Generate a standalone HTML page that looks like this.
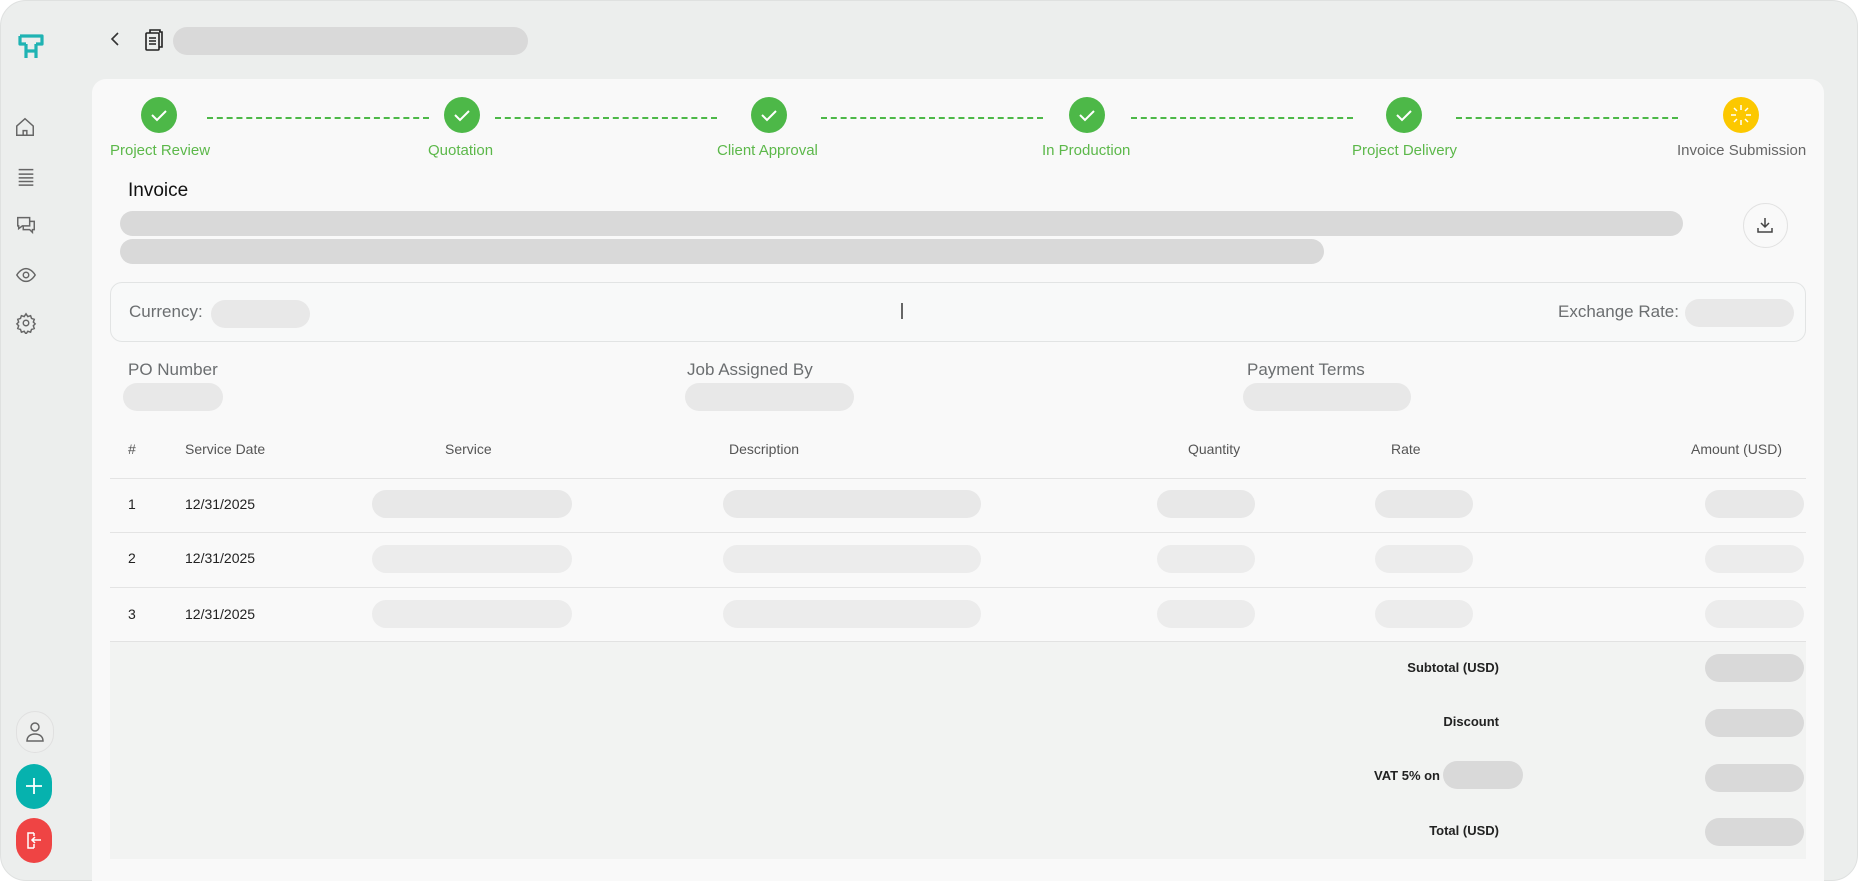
<!DOCTYPE html>
<html><head><meta charset="utf-8"><style>
*{margin:0;padding:0;box-sizing:border-box}
html,body{width:1858px;height:881px;overflow:hidden}
body{background:#fff;font-family:"Liberation Sans",sans-serif;position:relative}
.frame{position:absolute;left:0;top:0;width:1858px;height:881px;background:#eceeed;border-radius:26px;border:1px solid #dfe1e0;overflow:hidden}
.a{position:absolute}
.card{left:92px;top:79px;width:1732px;height:802px;background:#f9f9f9;border-radius:14px 14px 0 0}
.sk{position:absolute;border-radius:14px;background:#d9d9d9}
.sl{background:#e8e8e8}
.sx{background:#ececec}
.circ{position:absolute;width:36px;height:36px;border-radius:50%;background:#4db848;top:97px}
.lbl{position:absolute;top:142px;font-size:15px;color:#5cb84a;white-space:nowrap}
.dash{position:absolute;top:117px;height:0;border-top:2px dashed #4db848}
.t{position:absolute;font-size:14px;color:#222;white-space:nowrap}
.g{color:#6b6e70;font-size:17px}
.h{font-size:14px;color:#555}
.line{position:absolute;left:110px;width:1696px;height:1px;background:#e4e4e4}
</style></head><body>
<div class="frame"></div>
<!-- sidebar -->
<svg class="a" style="left:16px;top:32px" width="30" height="30" viewBox="0 0 30 30"><path d="M4 4h22v8h-6M4 4v8h6M10 12v14M20 12v14M10 19h10" fill="none" stroke="#1fb3b3" stroke-width="3.2" stroke-linejoin="round"/></svg>
<svg class="a" style="left:14px;top:116px" width="22" height="22" viewBox="0 0 24 24" fill="none" stroke="#666" stroke-width="1.6"><path d="M3 11L12 3l9 8v10H3z"/><path d="M10 21v-5h4v5"/></svg>
<svg class="a" style="left:15px;top:165px" width="22" height="22" viewBox="0 0 24 24" fill="none" stroke="#666" stroke-width="1.6"><path d="M4 5h16M4 10h16M4 14h16M4 18h16M4 22h16"/></svg>
<svg class="a" style="left:15px;top:214px" width="22" height="22" viewBox="0 0 24 24" fill="none" stroke="#666" stroke-width="1.6"><path d="M3 4h13v9H8l-4 3v-3H3z"/><path d="M16 8h5v9h-2v3l-3-3H9v-4"/></svg>
<svg class="a" style="left:15px;top:264px" width="22" height="22" viewBox="0 0 24 24" fill="none" stroke="#666" stroke-width="1.6"><path d="M2 12s4-7 10-7 10 7 10 7-4 7-10 7S2 12 2 12z"/><circle cx="12" cy="12" r="3"/></svg>
<svg class="a" style="left:15px;top:312px" width="22" height="22" viewBox="0 0 24 24" fill="none" stroke="#666" stroke-width="1.6"><circle cx="12" cy="12" r="3"/><path d="M12 2l2 3 3-1 1 3 3 1-1 3 2 2-2 2 1 3-3 1-1 3-3-1-2 3-2-3-3 1-1-3-3-1 1-3-2-2 2-2-1-3 3-1 1-3 3 1z"/></svg>
<div class="a" style="left:16px;top:711px;width:38px;height:42px;border-radius:20px;border:1px solid #e0e0e0;background:#eeefee"></div>
<svg class="a" style="left:25px;top:721px" width="20" height="22" viewBox="0 0 20 22" fill="none" stroke="#666" stroke-width="1.5"><circle cx="10" cy="6" r="4"/><path d="M2 20c0-5 4-7 8-7s8 2 8 7z"/></svg>
<div class="a" style="left:16px;top:764px;width:36px;height:45px;border-radius:18px;background:#06b2ae"></div>
<svg class="a" style="left:24px;top:776px" width="20" height="20" viewBox="0 0 20 20"><path d="M10 2v16M2 10h16" stroke="#fff" stroke-width="1.8"/></svg>
<div class="a" style="left:16px;top:818px;width:36px;height:45px;border-radius:18px;background:#ef4444"></div>
<svg class="a" style="left:24px;top:830px" width="20" height="20" viewBox="0 0 20 20" fill="none" stroke="#fff" stroke-width="1.5"><path d="M10 3H4v15h6M10 3v3M10 14v4"/><path d="M17 10H8M11 7l-3 3 3 3"/></svg>
<!-- header -->
<svg class="a" style="left:108px;top:31px" width="14" height="16" viewBox="0 0 14 16"><path d="M10 2L4 8l6 6" fill="none" stroke="#333" stroke-width="1.6"/></svg>
<svg class="a" style="left:143px;top:27px" width="22" height="26" viewBox="0 0 22 26" fill="none" stroke="#222" stroke-width="1.6"><rect x="3" y="6" width="13" height="17" rx="1"/><path d="M7 6V3h10v2M16 5h3v15h-3M6 11h7M6 14h7M6 17h7"/></svg>
<div class="sk" style="left:173px;top:27px;width:355px;height:28px"></div>
<div class="a card"></div>
<!-- stepper -->
<div class="dash" style="left:207px;width:222px"></div>
<div class="dash" style="left:495px;width:222px"></div>
<div class="dash" style="left:821px;width:222px"></div>
<div class="dash" style="left:1131px;width:222px"></div>
<div class="dash" style="left:1456px;width:222px"></div>
<div class="circ" style="left:141px"></div>
<div class="circ" style="left:444px"></div>
<div class="circ" style="left:751px"></div>
<div class="circ" style="left:1069px"></div>
<div class="circ" style="left:1386px"></div>
<div class="circ" style="left:1723px;background:#fcc800"></div>
<svg class="a" style="left:0;top:0" width="1858" height="200" fill="none" stroke="#fff" stroke-width="2">
<path d="M152 115l5 5 9-9M455 115l5 5 9-9M762 115l5 5 9-9M1080 115l5 5 9-9M1397 115l5 5 9-9"/>
<path d="M1741 105v5M1741 120v5M1731 115h5M1746 115h5M1734 108l3 3M1745 119l3 3M1748 108l-3 3M1737 119l-3 3" stroke-width="1.5"/>
</svg>
<div class="lbl" style="left:110px">Project Review</div>
<div class="lbl" style="left:428px">Quotation</div>
<div class="lbl" style="left:717px">Client Approval</div>
<div class="lbl" style="left:1042px">In Production</div>
<div class="lbl" style="left:1352px">Project Delivery</div>
<div class="lbl" style="left:1677px;color:#666">Invoice Submission</div>
<!-- invoice -->
<div class="t" style="left:128px;top:180px;font-size:19px;color:#111">Invoice</div>
<div class="sk" style="left:120px;top:211px;width:1563px;height:25px"></div>
<div class="sk" style="left:120px;top:239px;width:1204px;height:25px"></div>
<div class="a" style="left:1743px;top:203px;width:45px;height:45px;border-radius:50%;border:1px solid #e2e2e2"></div>
<svg class="a" style="left:1756px;top:216px" width="18" height="18" viewBox="0 0 18 18" fill="none" stroke="#444" stroke-width="1.5"><path d="M9 2v9M5 7l4 4 4-4M2 12v4h14v-4"/></svg>
<div class="a" style="left:110px;top:282px;width:1696px;height:60px;border:1px solid #e2e4e4;border-radius:12px;background:#f8f9f9"></div>
<div class="t g" style="left:129px;top:302px">Currency:</div>
<div class="sk sl" style="left:211px;top:300px;width:99px;height:28px"></div>
<div class="a" style="left:901px;top:303px;width:2px;height:16px;background:#666"></div>
<div class="t g" style="left:1558px;top:302px">Exchange Rate:</div>
<div class="sk sl" style="left:1685px;top:299px;width:109px;height:28px"></div>
<div class="t g" style="left:128px;top:360px">PO Number</div>
<div class="sk sl" style="left:123px;top:383px;width:100px;height:28px"></div>
<div class="t g" style="left:687px;top:360px">Job Assigned By</div>
<div class="sk sl" style="left:685px;top:383px;width:169px;height:28px"></div>
<div class="t g" style="left:1247px;top:360px">Payment Terms</div>
<div class="sk sl" style="left:1243px;top:383px;width:168px;height:28px"></div>
<!-- table -->
<div class="t h" style="left:128px;top:441px">#</div>
<div class="t h" style="left:185px;top:441px">Service Date</div>
<div class="t h" style="left:445px;top:441px">Service</div>
<div class="t h" style="left:729px;top:441px">Description</div>
<div class="t h" style="left:1188px;top:441px">Quantity</div>
<div class="t h" style="left:1391px;top:441px">Rate</div>
<div class="t h" style="left:1691px;top:441px">Amount (USD)</div>
<div class="line" style="top:478px"></div>
<div class="line" style="top:532px"></div>
<div class="line" style="top:587px"></div>
<div class="t" style="left:128px;top:496px">1</div><div class="t" style="left:185px;top:496px">12/31/2025</div>
<div class="t" style="left:128px;top:550px">2</div><div class="t" style="left:185px;top:550px">12/31/2025</div>
<div class="t" style="left:128px;top:606px">3</div><div class="t" style="left:185px;top:606px">12/31/2025</div>
<div class="sk sl" style="left:372px;top:490px;width:200px;height:28px"></div>
<div class="sk sl" style="left:723px;top:490px;width:258px;height:28px"></div>
<div class="sk sl" style="left:1157px;top:490px;width:98px;height:28px"></div>
<div class="sk sl" style="left:1375px;top:490px;width:98px;height:28px"></div>
<div class="sk sl" style="left:1705px;top:490px;width:99px;height:28px"></div>
<div class="sk sx" style="left:372px;top:545px;width:200px;height:28px"></div>
<div class="sk sx" style="left:723px;top:545px;width:258px;height:28px"></div>
<div class="sk sx" style="left:1157px;top:545px;width:98px;height:28px"></div>
<div class="sk sx" style="left:1375px;top:545px;width:98px;height:28px"></div>
<div class="sk sx" style="left:1705px;top:545px;width:99px;height:28px"></div>
<div class="sk sx" style="left:372px;top:600px;width:200px;height:28px"></div>
<div class="sk sx" style="left:723px;top:600px;width:258px;height:28px"></div>
<div class="sk sx" style="left:1157px;top:600px;width:98px;height:28px"></div>
<div class="sk sx" style="left:1375px;top:600px;width:98px;height:28px"></div>
<div class="sk sx" style="left:1705px;top:600px;width:99px;height:28px"></div>
<div class="a" style="left:110px;top:641px;width:1696px;height:218px;background:#f2f3f2;border-top:1px solid #e2e2e2"></div>
<div class="t" style="left:1399px;top:660px;width:100px;text-align:right;font-weight:bold;font-size:13px">Subtotal (USD)</div>
<div class="t" style="left:1399px;top:714px;width:100px;text-align:right;font-weight:bold;font-size:13px">Discount</div>
<div class="t" style="left:1340px;top:768px;width:100px;text-align:right;font-weight:bold;font-size:13px">VAT 5% on</div>
<div class="sk" style="left:1443px;top:761px;width:80px;height:28px"></div>
<div class="t" style="left:1399px;top:823px;width:100px;text-align:right;font-weight:bold;font-size:13px">Total (USD)</div>
<div class="sk" style="left:1705px;top:654px;width:99px;height:28px"></div>
<div class="sk" style="left:1705px;top:709px;width:99px;height:28px"></div>
<div class="sk" style="left:1705px;top:764px;width:99px;height:28px"></div>
<div class="sk" style="left:1705px;top:818px;width:99px;height:28px"></div>
</body></html>
